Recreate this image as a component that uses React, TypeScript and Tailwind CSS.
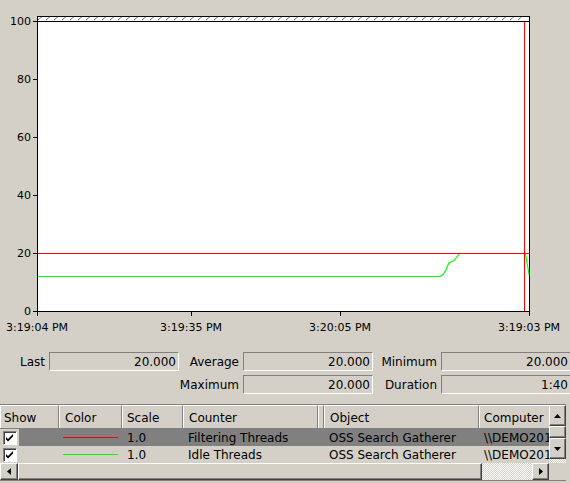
import React from "react";

const FONT = "font-['DejaVu_Sans',sans-serif]";

function Chart() {
  const yTicks = [
    { v: "100", y: 21 },
    { v: "80", y: 79 },
    { v: "60", y: 137 },
    { v: "40", y: 195 },
    { v: "20", y: 253 },
    { v: "0", y: 311 },
  ];
  const xTicks = [
    { t: "3:19:04 PM", x: 37 },
    { t: "3:19:35 PM", x: 191 },
    { t: "3:20:05 PM", x: 340 },
    { t: "3:19:03 PM", x: 529 },
  ];
  const hatch: number[] = [];
  for (let x = 38; x < 526; x += 8) hatch.push(x);
  return (
    <svg width={570} height={352} className="block shrink-0" shapeRendering="crispEdges">
      <rect x={37} y={16} width={492} height={295} fill="#ffffff" />
      {hatch.map((x) => (
        <line key={x} x1={x} y1={20} x2={x + 4} y2={16.5} stroke="#808080" strokeWidth={1} shapeRendering="auto" />
      ))}
      <line x1={37} y1={16.5} x2={530} y2={16.5} stroke="#000" />
      <line x1={37} y1={21.5} x2={530} y2={21.5} stroke="#000" />
      <line x1={37.5} y1={16} x2={37.5} y2={312} stroke="#000" />
      <line x1={529.5} y1={16} x2={529.5} y2={316} stroke="#000" />
      <line x1={37} y1={311.5} x2={530} y2={311.5} stroke="#000" />
      {yTicks.map((t) => (
        <g key={t.v}>
          <line x1={33} y1={t.y + 0.5} x2={37} y2={t.y + 0.5} stroke="#000" />
          <text x={31} y={t.y + 4} textAnchor="end" fontFamily="DejaVu Sans" fontSize={11} fill="#000">
            {t.v}
          </text>
        </g>
      ))}
      {xTicks.map((t) => (
        <g key={t.t}>
          <line x1={t.x + 0.5} y1={311} x2={t.x + 0.5} y2={316} stroke="#000" />
          <text x={t.x} y={331} textAnchor="middle" fontFamily="DejaVu Sans" fontSize={11} fill="#000">
            {t.t}
          </text>
        </g>
      ))}
      <line x1={38} y1={253.5} x2={529} y2={253.5} stroke="#ff0000" />
      <line x1={524.5} y1={22} x2={524.5} y2={311} stroke="#ff0000" />
      <polyline
        fill="none"
        stroke="#00ff00"
        strokeWidth={1.2}
        shapeRendering="auto"
        points="38,276.5 440,276.5 443,274.5 446,270 447,267 449,263 452,261.5 454,260.5 456,258 459,254"
      />
      <polyline
        fill="none"
        stroke="#00ff00"
        strokeWidth={1.2}
        shapeRendering="auto"
        points="525.5,254 527,263 528,268 529,275"
      />
    </svg>
  );
}

function Label({ children }: { children?: React.ReactNode }) {
  return <div className="flex items-center justify-end pr-[4px] text-black">{children}</div>;
}

function Box({ children }: { children: React.ReactNode }) {
  return (
    <div className="flex items-center justify-end pr-[2px] border border-t-[#808080] border-l-[#808080] border-r-white border-b-white text-black">
      {children}
    </div>
  );
}

const raised =
  "border border-t-white border-l-white border-r-[#404040] border-b-[#404040] shadow-[inset_-1px_-1px_#808080] bg-[#d4d0c8]";
const dither = "bg-[repeating-conic-gradient(#ffffff_0%_25%,#d4d0c8_0%_50%)] bg-[length:2px_2px]";

function Arrow({ dir }: { dir: "up" | "down" | "left" | "right" }) {
  const pts =
    dir === "up"
      ? "0,4 7,4 3.5,0"
      : dir === "down"
      ? "0,0 7,0 3.5,4"
      : dir === "left"
      ? "4,0 4,7 0,3.5"
      : "0,0 0,7 4,3.5";
  const w = dir === "up" || dir === "down" ? 7 : 4;
  const h = dir === "up" || dir === "down" ? 4 : 7;
  return (
    <svg width={w} height={h} className="block">
      <polygon points={pts} fill="#000" />
    </svg>
  );
}

function Check() {
  return (
    <div className="ml-[3px] w-[14px] h-[14px] bg-white border border-t-[#808080] border-l-[#808080] border-r-white border-b-white shadow-[inset_1px_1px_#404040] flex items-center justify-center">
      <svg width={10} height={10} className="block">
        <polygon points="1,4 3,6 8,1 8,3.5 3,8.5 1,6.5" fill="#000" />
      </svg>
    </div>
  );
}

const cols = [
  { name: "Show", w: "w-[59px]", pl: "pl-[3px]" },
  { name: "Color", w: "w-[63px]", pl: "pl-[5px]" },
  { name: "Scale", w: "w-[61px]", pl: "pl-[4px]" },
  { name: "Counter", w: "w-[135px]", pl: "pl-[5px]" },
  { name: "", w: "w-[6px]", pl: "pl-0" },
  { name: "Object", w: "w-[155px]", pl: "pl-[5px]" },
  { name: "Computer", w: "w-[90px]", pl: "pl-[4px]" },
];

function Row({ selected, color, counter }: { selected: boolean; color: string; counter: string }) {
  const bg = selected ? "bg-[#808080]" : "bg-[#d4d0c8]";
  return (
    <div className="flex h-[17px] shrink-0 items-center text-black">
      <div className="w-[19px] h-full flex items-center shrink-0 bg-[#d4d0c8]">
        <Check />
      </div>
      <div className={`flex h-full items-center ${bg}`}>
        <div className="w-[40px] shrink-0" />
        <div className="w-[63px] shrink-0 flex items-center">
          <div className="ml-[4px] w-[55px] h-[1px]" style={{ backgroundColor: color }} />
        </div>
        <div className="w-[61px] shrink-0 pl-[5px] pt-[1px] whitespace-nowrap">1.0</div>
        <div className="w-[135px] shrink-0 pl-[5px] pt-[1px] whitespace-nowrap">{counter}</div>
        <div className="w-[6px] shrink-0" />
        <div className="w-[155px] shrink-0 pl-[5px] pt-[1px] whitespace-nowrap">OSS Search Gatherer</div>
        <div className="w-[90px] shrink-0 pl-[5px] pt-[1px] whitespace-nowrap">\\DEMO2010A</div>
      </div>
    </div>
  );
}

export default function App() {
  return (
    <div className={`w-[570px] h-[483px] overflow-hidden bg-[#d4d0c8] flex flex-col ${FONT} text-[12px]`}>
      <Chart />
      <div className="grid grid-cols-[49px_130px_64px_130px_68px_130px] grid-rows-[19px_19px] gap-y-[4px] w-[571px] shrink-0">
        <Label>Last</Label>
        <Box>20.000</Box>
        <Label>Average</Label>
        <Box>20.000</Box>
        <Label>Minimum</Label>
        <Box>20.000</Box>
        <div />
        <div />
        <Label>Maximum</Label>
        <Box>20.000</Box>
        <Label>Duration</Label>
        <Box>1:40</Box>
      </div>
      <div className="mt-[10px] w-[566px] shrink-0 flex flex-col border-t border-b border-[#808080]">
        <div className="flex">
          <div className="w-[549px] overflow-hidden flex flex-col">
            <div className="flex h-[24px] shrink-0 border-b border-[#808080]">
              {cols.map((c, i) => (
                <div
                  key={i}
                  className={`${c.w} ${c.pl} shrink-0 h-full flex items-center pt-[1px] border-t border-l border-white border-r border-r-[#808080] whitespace-nowrap text-black`}
                >
                  {c.name}
                </div>
              ))}
            </div>
            <Row selected={true} color="#ff0000" counter="Filtering Threads" />
            <Row selected={false} color="#00ff00" counter="Idle Threads" />
          </div>
          <div className="w-[17px] flex flex-col shrink-0">
            <div className={`h-[21px] flex items-center justify-center ${raised}`}>
              <Arrow dir="up" />
            </div>
            <div className={`h-[12px] ${raised}`} />
            <div className={`h-[21px] flex items-center justify-center ${raised}`}>
              <Arrow dir="down" />
            </div>
            <div className={`h-[4px] ${dither}`} />
          </div>
        </div>
        <div className="flex h-[17px] shrink-0">
          <div className={`w-[18px] flex items-center justify-center ${raised}`}>
            <Arrow dir="left" />
          </div>
          <div className={`w-[464px] ${raised}`} />
          <div className={`w-[50px] ${dither}`} />
          <div className={`w-[17px] flex items-center justify-center ${raised}`}>
            <Arrow dir="right" />
          </div>
          <div className="w-[17px] bg-[#d4d0c8]" />
        </div>
      </div>
    </div>
  );
}
